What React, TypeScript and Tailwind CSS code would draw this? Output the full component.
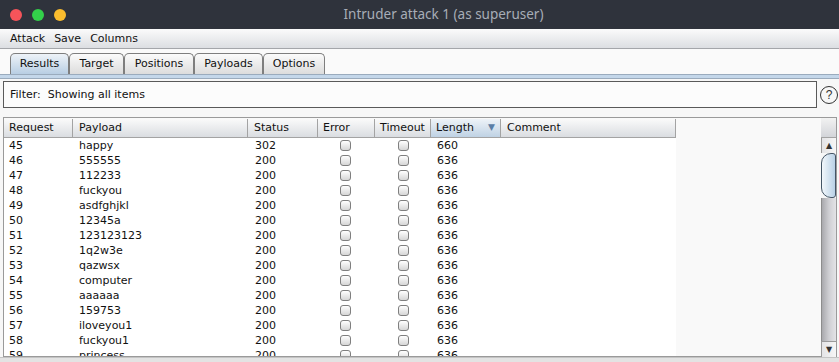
import React from "react";

const rows: [string, string, string, string][] = [
  ["45", "happy", "302", "660"],
  ["46", "555555", "200", "636"],
  ["47", "112233", "200", "636"],
  ["48", "fuckyou", "200", "636"],
  ["49", "asdfghjkl", "200", "636"],
  ["50", "12345a", "200", "636"],
  ["51", "123123123", "200", "636"],
  ["52", "1q2w3e", "200", "636"],
  ["53", "qazwsx", "200", "636"],
  ["54", "computer", "200", "636"],
  ["55", "aaaaaa", "200", "636"],
  ["56", "159753", "200", "636"],
  ["57", "iloveyou1", "200", "636"],
  ["58", "fuckyou1", "200", "636"],
  ["59", "princess", "200", "636"],
];

function Checkbox() {
  return (
    <div className="w-[11px] h-[11px] rounded-[3px] border border-[#7f7f7f] bg-gradient-to-b from-white to-[#d6d6d6]" />
  );
}

const tabs = ["Results", "Target", "Positions", "Payloads", "Options"];
const tabW = ["w-[59px]", "w-[55px]", "w-[70px]", "w-[69px]", "w-[62px]"];

export default function App() {
  return (
    <div className="w-[839px] h-[362px] overflow-hidden flex flex-col bg-[#f7f7f7] font-['DejaVu_Sans',sans-serif] text-[11px] text-[#111]">
      {/* Title bar */}
      <div className="h-[29px] shrink-0 bg-[#2f333c] flex items-center">
        <div className="w-[70px] flex items-center gap-[10px] pl-[10px]">
          <div className="w-[12px] h-[12px] rounded-full bg-[#f6545a]" />
          <div className="w-[12px] h-[12px] rounded-full bg-[#33d04a]" />
          <div className="w-[12px] h-[12px] rounded-full bg-[#fbbd2e]" />
        </div>
        <div className="flex-1 pr-[22px] text-center font-['Noto_Sans',sans-serif] text-[13.5px] text-[#a7adb7] leading-none">
          Intruder attack 1 (as superuser)
        </div>
      </div>

      {/* Menu bar */}
      <div className="h-[20px] shrink-0 flex items-center gap-[9px] pl-[10px] pt-[1px] bg-gradient-to-b from-[#fbfbfb] to-[#dcdee2] border-b border-[#a4a6aa]">
        <span>Attack</span>
        <span>Save</span>
        <span>Columns</span>
      </div>

      {/* Tabs */}
      <div className="h-[25px] shrink-0 flex items-end pl-[10px] bg-[#fafafa]">
        {tabs.map((t, i) => (
          <div
            key={t}
            className={`${tabW[i]} h-[21px] flex items-center justify-center pt-[1px] border border-b-0 border-[#7e7e7e] rounded-t-[5px] ${
              i === 0
                ? "bg-gradient-to-b from-[#eef3f8] to-[#b8cee3]"
                : "bg-gradient-to-b from-[#fbfbfb] to-[#dcdcdc]"
            }`}
          >
            {t}
          </div>
        ))}
      </div>
      <div className="h-[5px] shrink-0 bg-[#c4d7ea] border-t border-[#9aabbd] border-b border-[#4b5664]" />

      {/* Filter */}
      <div className="h-[27px] shrink-0 mt-[2px] flex items-center pl-[3px]">
        <div className="w-[814px] h-[27px] border border-[#5a5a5a] bg-[#fcfcfc] flex items-center pl-[6px] pt-[1px]">
          Filter:&nbsp; Showing all items
        </div>
        <div className="ml-[3px] w-[18px] h-[18px] rounded-full border border-[#333] flex items-center justify-center text-[12px] leading-none text-[#333] font-['Liberation_Sans',sans-serif]">
          ?
        </div>
      </div>

      {/* Table */}
      <div className="h-[240px] shrink-0 mt-[9px] ml-[3px] w-[834px] flex border-t border-[#9a9a9a]">
        <div className="w-[818px] flex flex-col border-l border-[#9a9a9a] bg-[#f9f9f9] overflow-hidden border-b">
          {/* Header */}
          <div className="h-[20px] shrink-0 flex pt-[1px]">
            <div className="w-[69px] pl-[5px] flex items-center border-r border-b border-[#a3a3a3] bg-gradient-to-b from-[#fafafa] to-[#dadde1]">Request</div>
            <div className="w-[175px] pl-[6px] flex items-center border-r border-b border-[#a3a3a3] bg-gradient-to-b from-[#fafafa] to-[#dadde1]">Payload</div>
            <div className="w-[70px] pl-[6px] flex items-center border-r border-b border-[#a3a3a3] bg-gradient-to-b from-[#fafafa] to-[#dadde1]">Status</div>
            <div className="w-[57px] pl-[5px] flex items-center border-r border-b border-[#a3a3a3] bg-gradient-to-b from-[#fafafa] to-[#dadde1]">Error</div>
            <div className="w-[56px] pl-[5px] flex items-center border-r border-b border-[#a3a3a3] bg-gradient-to-b from-[#fafafa] to-[#dadde1]">Timeout</div>
            <div className="w-[70px] pl-[5px] pr-[5px] flex items-center justify-between border-r border-b border-[#a3a3a3] bg-gradient-to-b from-[#eef3f8] to-[#bfd2e4]">
              <span>Length</span>
              <span className="text-[9px] text-[#5b7ea6]">▼</span>
            </div>
            <div className="w-[175px] pl-[6px] flex items-center border-r border-b border-[#a3a3a3] bg-gradient-to-b from-[#fafafa] to-[#dadde1]">Comment</div>
            <div className="flex-1" />
          </div>
          {/* Body */}
          <div className="flex-1 overflow-hidden">
            {rows.map((r) => (
              <div key={r[0]} className="h-[15px] flex">
                <div className="w-[672px] flex bg-white">
                  <div className="w-[69px] pl-[5px] leading-[15px]">{r[0]}</div>
                  <div className="w-[175px] pl-[6px] leading-[15px]">{r[1]}</div>
                  <div className="w-[70px] pl-[7px] leading-[15px]">{r[2]}</div>
                  <div className="w-[57px] flex items-center justify-center pr-[2px]">
                    <Checkbox />
                  </div>
                  <div className="w-[56px] flex items-center justify-center">
                    <Checkbox />
                  </div>
                  <div className="w-[70px] pl-[6px] leading-[15px]">{r[3]}</div>
                  <div className="w-[175px]" />
                </div>
              </div>
            ))}
          </div>
        </div>
        {/* Vertical scrollbar */}
        <div className="w-[16px] flex flex-col border-r border-[#9a9a9a]">
          <div className="h-[20px] shrink-0 border-b border-[#a3a3a3] bg-gradient-to-b from-[#f2f2f2] to-[#d3d5d9]" />
          <div className="h-[15px] shrink-0 flex items-center justify-center text-[8px] text-[#333] bg-gradient-to-r from-[#e4e4e6] to-[#f6f6f6] border-l border-[#9a9a9a]">▲</div>
          <div className="h-[45px] shrink-0 rounded-l-[10px] rounded-r-[3px] border border-[#445566] bg-gradient-to-r from-[#f2f7fb] to-[#b9d1e6]" />
          <div className="flex-1 bg-gradient-to-r from-[#a9a9ad] via-[#cfcfd3] to-[#e3e3e6] border-l border-[#8d8d8d]" />
          <div className="h-[16px] shrink-0 flex items-center justify-center text-[8px] text-[#333] bg-gradient-to-r from-[#e4e4e6] to-[#f6f6f6] border-l border-t border-[#9a9a9a]">▼</div>
        </div>
      </div>
      <div className="flex-1 bg-[#e3e3e3] border-t border-[#c4c4c4]" />
    </div>
  );
}
